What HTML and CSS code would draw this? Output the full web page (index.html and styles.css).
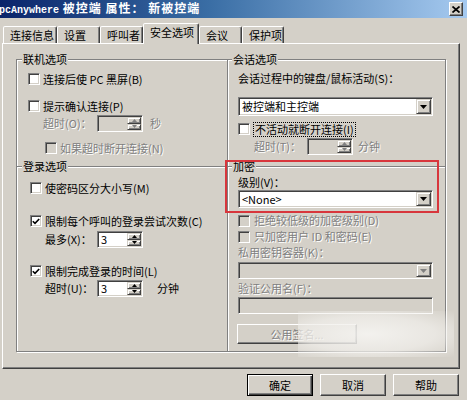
FILE: index.html
```html
<!DOCTYPE html>
<html lang="zh-CN">
<head>
<meta charset="utf-8">
<title>pcAnywhere 被控端 属性</title>
<link rel="stylesheet" href="styles.css">
</head>
<body>
<div class="window">
  <div class="titlebar">
    <span class="title"><span class="latin">pcAnywhere</span> 被控端 属性： 新被控端</span>
    <span class="close"><svg width="8" height="7" viewBox="0 0 8 7"><path d="M0.5 0.5L7.5 6.5M7.5 0.5L0.5 6.5" stroke="#000" stroke-width="1.7"/></svg></span>
  </div>

  <div class="tabs">
    <div class="tab w54">连接信息</div>
    <div class="tab w43">设置</div>
    <div class="tab w43">呼叫者</div>
    <div class="tab active w56">安全选项</div>
    <div class="tab w43">会议</div>
    <div class="tab w42">保护项</div>
  </div>

  <div class="panel">
    <div class="frame">
      <!-- 联机选项 -->
      <div class="cell">
        <div class="legend">联机选项</div>
        <div class="row mt5 pl11"><span class="cb"></span><span>连接后使 PC 黑屏(B)</span></div>
        <div class="row mt11 pl11"><span class="cb"></span><span>提示确认连接(P)</span></div>
        <div class="row h17 mt1 pl26">
          <span class="lbl w54 dis">超时(O)：</span>
          <span class="spin off"><span class="val"></span><span class="btns"><span class="sb"><svg width="5" height="3" viewBox="0 0 5 3"><path d="M0 3H5L2.5 0Z" fill="#808080"/></svg></span><span class="sb"><svg width="5" height="3" viewBox="0 0 5 3"><path d="M0 0H5L2.5 3Z" fill="#808080"/></svg></span></span></span>
          <span class="dis ml7">秒</span>
        </div>
        <div class="row mt8 pl28"><span class="cb off"></span><span class="dis">如果超时断开连接(N)</span></div>
      </div>

      <!-- 会话选项 -->
      <div class="cell">
        <div class="legend ml4">会话选项</div>
        <div class="row h14 mt5 pl10">会话过程中的键盘/鼠标活动(S)：</div>
        <div class="combo h19 mt12 ml10"><span class="txt">被控端和主控端</span><span class="dd"><svg width="7" height="4" viewBox="0 0 7 4"><path d="M0 0H7L3.5 4Z" fill="#000"/></svg></span></div>
        <div class="row mt5 pl10"><span class="cb gap4"></span><span class="focus">不活动就断开连接(I)</span></div>
        <div class="row h17 mt1 pl26">
          <span class="lbl w53 dis">超时(T)：</span>
          <span class="spin off"><span class="val"></span><span class="btns"><span class="sb"><svg width="5" height="3" viewBox="0 0 5 3"><path d="M0 3H5L2.5 0Z" fill="#808080"/></svg></span><span class="sb"><svg width="5" height="3" viewBox="0 0 5 3"><path d="M0 0H5L2.5 3Z" fill="#808080"/></svg></span></span></span>
          <span class="dis ml5">分钟</span>
        </div>
      </div>

      <!-- 登录选项 -->
      <div class="cell">
        <div class="legend">登录选项</div>
        <div class="row mt7 pl13"><span class="cb"></span><span>使密码区分大小写(M)</span></div>
        <div class="row mt17 pl13"><span class="cb"><svg width="8" height="7" viewBox="0 0 8 7"><path d="M0.8 3.2L3 5.4L7.2 1" stroke="#000" stroke-width="1.6" fill="none"/></svg></span><span>限制每个呼叫的登录尝试次数(C)</span></div>
        <div class="row h17 mt2 pl28">
          <span class="lbl w52">最多(X)：</span>
          <span class="spin"><span class="val">3</span><span class="btns"><span class="sb"><svg width="5" height="3" viewBox="0 0 5 3"><path d="M0 3H5L2.5 0Z" fill="#000"/></svg></span><span class="sb"><svg width="5" height="3" viewBox="0 0 5 3"><path d="M0 0H5L2.5 3Z" fill="#000"/></svg></span></span></span>
        </div>
        <div class="row mt15 pl13"><span class="cb"><svg width="8" height="7" viewBox="0 0 8 7"><path d="M0.8 3.2L3 5.4L7.2 1" stroke="#000" stroke-width="1.6" fill="none"/></svg></span><span>限制完成登录的时间(L)</span></div>
        <div class="row h17 mt1 pl28">
          <span class="lbl w52">超时(U)：</span>
          <span class="spin"><span class="val">3</span><span class="btns"><span class="sb"><svg width="5" height="3" viewBox="0 0 5 3"><path d="M0 3H5L2.5 0Z" fill="#000"/></svg></span><span class="sb"><svg width="5" height="3" viewBox="0 0 5 3"><path d="M0 0H5L2.5 3Z" fill="#000"/></svg></span></span></span>
          <span class="ml14">分钟</span>
        </div>
      </div>

      <!-- 加密 -->
      <div class="cell">
        <div class="legend ml4">加密</div>
        <div class="row h14 mt2 pl10">级别(V)：</div>
        <div class="combo h18 mt1 ml10"><span class="txt">&lt;None&gt;</span><span class="dd"><svg width="7" height="4" viewBox="0 0 7 4"><path d="M0 0H7L3.5 4Z" fill="#000"/></svg></span></div>
        <div class="row h15 mt5 pl10"><span class="cb off gap4"></span><span class="dis">拒绝较低级的加密级别(D)</span></div>
        <div class="row h15 mt1 pl10"><span class="cb off gap4"></span><span class="dis">只加密用户 ID 和密码(E)</span></div>
        <div class="row h14 mt1 pl10"><span class="dis">私用密钥容器(K)：</span></div>
        <div class="combo off h17 mt3 ml10"><span class="txt"></span><span class="dd"><svg width="7" height="4" viewBox="0 0 7 4"><path d="M0 0H7L3.5 4Z" fill="#808080"/></svg></span></div>
        <div class="row h14 mt2 pl10"><span class="dis">验证公用名(F)：</span></div>
        <div class="field off h17 mt2 ml10"></div>
        <div class="pbtn mt10"><span class="dis">公用签名...</span></div>
        <div class="highlight"></div>
      </div>
      <div class="wash"></div>
    </div>
  </div>

  <div class="actions">
    <div class="btn default">确定</div>
    <div class="btn">取消</div>
    <div class="btn">帮助</div>
  </div>
</div>
</body>
</html>
```
FILE: styles.css
```css
* { box-sizing: border-box; }
html, body { margin: 0; padding: 0; }
body {
  width: 467px;
  height: 400px;
  overflow: hidden;
  background: #d4d0c8;
  color: #000;
  font-family: "Noto Sans CJK SC", "Noto Sans", sans-serif;
  font-size: 11px;
  line-height: 13px;
}

/* title bar */
.titlebar {
  height: 18px;
  display: flex;
  align-items: center;
  justify-content: space-between;
  background: linear-gradient(90deg, #0a246a 0%, #3a6ea5 45%, #a6caf0 100%);
  color: #fff;
  font-weight: bold;
  font-size: 12px;
}
.title { margin-left: -1px; white-space: nowrap; line-height: 16px; letter-spacing: 1px; }
.title .latin { font-family: "Liberation Mono", monospace; font-size: 10px; letter-spacing: 0; }
.close {
  width: 14px; height: 14px; margin-right: 4px;
  background: #d4d0c8;
  border: 1px solid; border-color: #fff #404040 #404040 #fff;
  box-shadow: inset -1px -1px #808080;
  display: flex; align-items: center; justify-content: center;
}

/* tabs */
.tabs {
  display: flex;
  align-items: flex-end;
  height: 21px;
  margin-top: 4px;
  padding-left: 3px;
}
.tab {
  height: 17px;
  padding: 2px 0 0 6px;
  border: 1px solid;
  border-bottom: none;
  border-color: #fff #404040 transparent #fff;
  box-shadow: inset -1px 0 #808080;
  border-radius: 2px 2px 0 0;
  white-space: nowrap;
  background: #d4d0c8;
}
.tab.active {
  height: 21px;
  margin-bottom: -1px;
  position: relative;
  z-index: 1;
}
.w54 { width: 54px; } .w43 { width: 43px; } .w56 { width: 56px; } .w42 { width: 42px; }

/* panel */
.panel {
  margin-left: 2px;
  width: 458px;
  height: 326px;
  border: 1px solid;
  border-color: #fff #404040 #404040 #fff;
  box-shadow: inset -1px -1px #808080;
  padding: 15px 0 0 13px;
}
.frame {
  position: relative;
  display: grid;
  grid-template-columns: 211px 218px;
  grid-template-rows: 107px 185px;
  width: 430px;
  border-right: 1px solid #808080;
  border-bottom: 1px solid #808080;
  box-shadow: 1px 1px 0 #fff;
}
.cell {
  position: relative;
  border-top: 1px solid #808080;
  border-left: 1px solid #808080;
  box-shadow: inset 1px 1px 0 #fff;
}
.legend {
  width: fit-content;
  margin: -7px 0 0 5px;
  padding: 0 1px;
  background: #d4d0c8;
  line-height: 13px;
  position: relative;
}
.legend.ml4 { margin-left: 4px; }

.row {
  display: flex;
  align-items: center;
  height: 16px;
  white-space: nowrap;
}
.h14 { height: 14px; } .h15 { height: 15px; } .h17 { height: 17px; } .h18 { height: 18px; } .h19 { height: 19px; }
.mt1 { margin-top: 1px; } .mt2 { margin-top: 2px; } .mt3 { margin-top: 3px; } .mt5 { margin-top: 5px; }
.mt7 { margin-top: 7px; } .mt8 { margin-top: 8px; } .mt10 { margin-top: 10px; } .mt11 { margin-top: 11px; }
.mt12 { margin-top: 12px; } .mt15 { margin-top: 15px; } .mt17 { margin-top: 17px; }
.pl10 { padding-left: 10px; } .pl11 { padding-left: 11px; } .pl13 { padding-left: 13px; }
.pl26 { padding-left: 26px; } .pl28 { padding-left: 28px; }
.ml5 { margin-left: 5px; } .ml7 { margin-left: 7px; } .ml10 { margin-left: 10px; } .ml14 { margin-left: 14px; }
.lbl { flex: none; }
.lbl.w52 { width: 52px; } .lbl.w53 { width: 53px; } .lbl.w54 { width: 54px; }

.dis { color: #808080; text-shadow: 1px 1px 0 #fff; }
.focus { outline: 1px dotted #000; outline-offset: 0; padding: 0 1px; line-height: 13px; }

/* checkbox */
.cb {
  flex: none;
  width: 12px; height: 12px;
  margin-right: 3px;
  background: #fff;
  border: 1px solid; border-color: #808080 #fff #fff #808080;
  box-shadow: inset 1px 1px #404040, inset -1px -1px #d4d0c8;
  display: flex; align-items: center; justify-content: center;
}
.cb.gap4 { margin-right: 4px; }
.cb.off { background: #d4d0c8; }

/* spin box */
.spin {
  flex: none;
  width: 46px; height: 17px;
  display: flex;
  background: #fff;
  border: 1px solid; border-color: #808080 #fff #fff #808080;
  box-shadow: inset 1px 1px #404040, inset -1px -1px #d4d0c8;
  padding: 1px;
}
.spin.off { background: #d4d0c8; }
.spin .val { flex: 1; padding-left: 2px; line-height: 13px; }
.spin .btns { width: 14px; display: flex; flex-direction: column; }
.spin .sb {
  flex: 1;
  background: #d4d0c8;
  border: 1px solid; border-color: #d4d0c8 #404040 #404040 #d4d0c8;
  box-shadow: inset 1px 1px #fff, inset -1px -1px #808080;
  display: flex; align-items: center; justify-content: center;
}
.spin .sb svg { display: block; }

/* combo / field */
.combo, .field {
  width: 195px;
  background: #fff;
  border: 1px solid; border-color: #808080 #fff #fff #808080;
  box-shadow: inset 1px 1px #404040, inset -1px -1px #d4d0c8;
  padding: 1px;
}
.combo { display: flex; align-items: center; }
.combo.off, .field.off { background: #d4d0c8; }
.combo .txt { flex: 1; padding-left: 2px; white-space: nowrap; }
.combo .dd {
  flex: none;
  width: 15px; height: 100%;
  background: #d4d0c8;
  border: 1px solid; border-color: #d4d0c8 #404040 #404040 #d4d0c8;
  box-shadow: inset 1px 1px #fff, inset -1px -1px #808080;
  display: flex; align-items: center; justify-content: center;
}

/* push buttons */
.pbtn {
  width: 120px; height: 20px;
  margin-left: 9px;
  display: flex; align-items: center; justify-content: center;
  border: 1px solid; border-color: #fff #404040 #404040 #fff;
  box-shadow: inset -1px -1px #808080;
}
.actions {
  display: flex;
  justify-content: flex-end;
  gap: 7px;
  margin-top: 5px;
  padding-right: 8px;
}
.btn {
  width: 66px; height: 22px;
  display: flex; align-items: center; justify-content: center;
  border: 1px solid; border-color: #fff #404040 #404040 #fff;
  box-shadow: inset -1px -1px #808080;
}
.btn.default {
  border-color: #000;
  box-shadow: inset 1px 1px #fff, inset -1px -1px #404040, inset -2px -2px #808080;
}

/* overlays */
.highlight {
  position: absolute;
  left: -3px; top: -7px;
  width: 214px; height: 53px;
  border: 2px solid #d8363c;
  pointer-events: none;
}
.wash {
  position: absolute;
  left: 282px; top: 252px;
  width: 156px; height: 46px;
  background: radial-gradient(ellipse at 45% 50%, rgba(246,245,242,0.9) 0%, rgba(240,238,234,0.75) 55%, rgba(236,234,230,0) 100%);
  pointer-events: none;
}
```
